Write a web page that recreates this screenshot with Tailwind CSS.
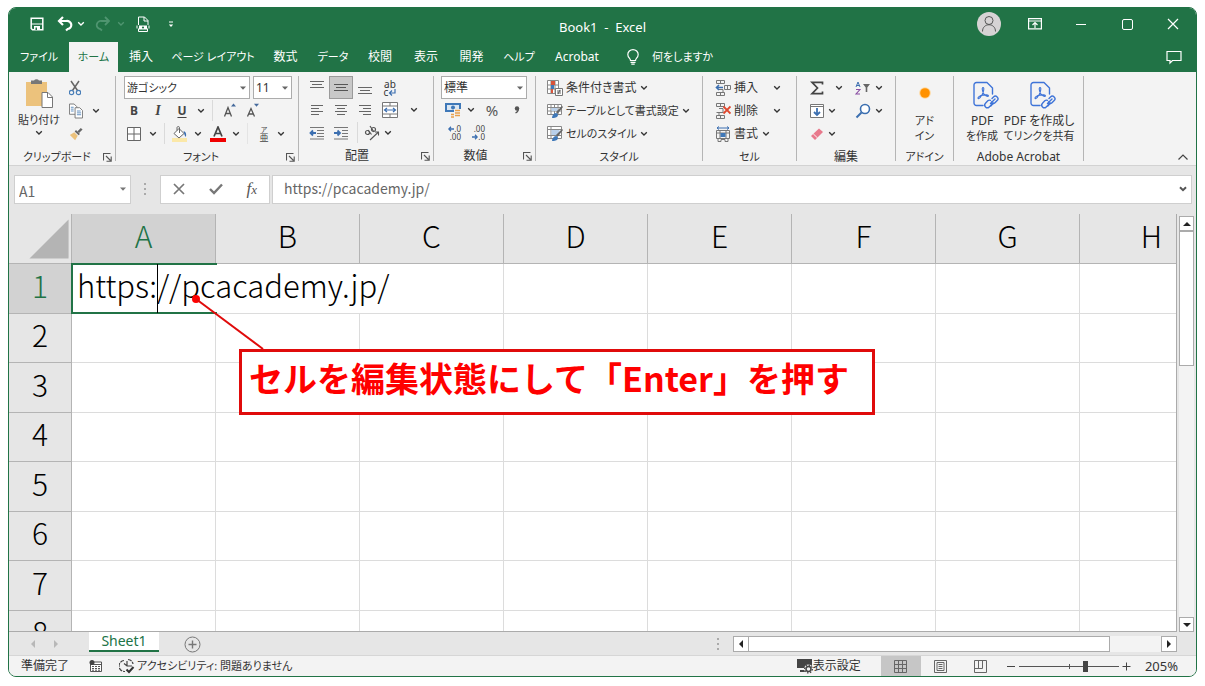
<!DOCTYPE html>
<html lang="ja">
<head>
<meta charset="utf-8">
<title>Book1 - Excel</title>
<script src="https://cdn.jsdelivr.net/npm/@tailwindcss/browser@4"></script>
</head>
<body class="bg-white">
<svg class="hidden" aria-hidden="true">
  <symbol id="chev" viewBox="0 0 8 6"><path d="M1.2 1.2 4 4l2.800-2.800" fill="none" stroke="currentColor" stroke-width="1.300"/></symbol>
  <symbol id="tri" viewBox="0 0 6 4"><path d="M0 .5h6L3 3.800z" fill="currentColor"/></symbol>
  <symbol id="launch" viewBox="0 0 9 9"><path d="M.5 7.500V.5h7M3 3l4.500 4.500M8.200 3.500v4.700H3.500" fill="none" stroke="#555" stroke-width="1.100"/></symbol>
  <symbol id="pdf" viewBox="0 0 26 30">
    <g fill="none" stroke="#3f74d8" stroke-width="1.400" stroke-linecap="round" stroke-linejoin="round">
      <path d="M10 24.500H3.500A2.500 2.500 0 0 1 1 22V4a2.500 2.500 0 0 1 2.500-2.500H14l5.500 5.500v6"/>
      <path d="M10 6.500c1.600 0 .5 4.500-.8 7-1.300 2.400-3 4.600-4 4-1.200-.8 2-3 4.500-3.400 2.800-.5 6-.3 5.700.9-.4 1.200-3.500-.5-4.800-2.500-1.200-2-2-6-.6-6z" stroke-width="1.100"/>
      <path d="M17.500 22.500l4.500-4.500M19 17.500l1.500-1.500a2.500 2.500 0 0 1 3.700 3.600l-2.200 2.200a2.500 2.500 0 0 1-3.500 0M20.500 22l-2.700 2.900"/>
      <path d="M17.500 19.300a2.600 2.600 0 0 0-2.700.5l-2.300 2.400a2.600 2.600 0 0 0 3.700 3.700l2-2a2.500 2.500 0 0 0 .3-3"/>
    </g>
  </symbol>
</svg>

<div class="flex h-screen flex-col px-2 pt-[7px] pb-[9px] font-['Noto_Sans','Noto_Sans_CJK_JP',sans-serif] text-[12px] leading-4 text-[#333] [font-feature-settings:'palt']">
<div class="flex min-h-0 flex-1 flex-col overflow-hidden rounded-lg border border-[#217346] bg-[#e6e6e6]">

  <!-- Title bar -->
  <header class="grid h-[34px] shrink-0 grid-cols-[1fr_auto_1fr] items-center bg-[#217346] text-white">
    <div class="flex items-center pb-0.5 pl-[20px]">
      <button aria-label="上書き保存" class="flex w-4 justify-center"><svg class="size-3.5" viewBox="0 0 14 14"><path d="M1.200 1.200h11.600v11.600H2.500L1.200 11.500z" fill="none" stroke="#fff" stroke-width="1.500"/><path d="M1 7h12" stroke="#fff"/><path d="M4 9h6v4H4z" fill="#fff"/><path d="M5.500 10.500h1.500V13H5.500z" fill="#217346"/></svg></button>
      <button aria-label="元に戻す" class="ml-3 flex w-4 justify-center"><svg class="size-4" viewBox="0 0 16 16"><path d="M6 1 2 5l4 4M2.500 5h6.700a4.300 4 0 0 1 1.500 8L9 14.500" fill="none" stroke="#fff" stroke-width="2.200"/></svg></button>
      <button aria-label="元に戻す履歴" class="flex w-4 justify-center"><svg class="h-1.5 w-2"><use href="#chev"/></svg></button>
      <button aria-label="やり直し" class="ml-1.5 flex w-4 justify-center text-[#4f9570]"><svg class="size-4" viewBox="0 0 16 16"><path d="m10 1 4 4-4 4M13.500 5H6.800a4.300 4 0 0 0-1.500 8L7 14.500" fill="none" stroke="currentColor" stroke-width="1.800"/></svg></button>
      <button aria-label="やり直し履歴" class="flex w-5 justify-center text-[#4f9570]"><svg class="h-1.5 w-2"><use href="#chev"/></svg></button>
      <button aria-label="印刷プレビュー" class="ml-1 flex w-4 justify-center"><svg class="h-4 w-3.5" viewBox="0 0 14 16"><path d="M2.500 9V1h6l3.500 3.500V9M8 1v4h4" fill="none" stroke="#fff"/><path d="M1 9.500v3M13 9.500v3M2.500 12.500v3h9v-3" fill="none" stroke="#fff"/><path d="M3 9.500h8v4H3z" fill="#fff"/><circle cx="7" cy="11.500" r="1.100" fill="#217346"/></svg></button>
      <button aria-label="クイック アクセスのカスタマイズ" class="ml-3 flex w-4 justify-center"><svg class="h-2 w-1.5" viewBox="0 0 6 8"><path d="M1 2h4" stroke="#fff"/><path d="M.8 4.500h4.400L3 7z" fill="#fff"/></svg></button>
    </div>
    <h1 class="whitespace-pre pt-1 text-[13px]">Book1  -  Excel</h1>
    <div class="flex items-center justify-end pb-0.5">
      <button aria-label="アカウント" class="flex w-[46px] justify-center"><svg class="size-6" viewBox="0 0 24 24"><circle cx="12" cy="12" r="12" fill="#d6d3d4"/><circle cx="12" cy="8.500" r="4" fill="none" stroke="#555"/><path d="M5.500 19.500c0-9 13-9 13 0" fill="none" stroke="#555"/></svg></button>
      <button aria-label="リボンの表示オプション" class="flex w-[46px] justify-center"><svg class="h-3 w-3.5" viewBox="0 0 14 12"><path d="M.6.6h12.800v10.200H.6zM.6 3h12.800" fill="none" stroke="#fff" stroke-width="1.200"/><path d="M7 10V4.500M4.500 7 7 4.500 9.500 7" fill="none" stroke="#fff" stroke-width="1.200"/></svg></button>
      <button aria-label="最小化" class="flex w-[46px] justify-center"><span class="h-px w-2.5 bg-white"></span></button>
      <button aria-label="最大化" class="flex w-[46px] justify-center"><span class="size-[11px] rounded-xs border border-white"></span></button>
      <button aria-label="閉じる" class="flex w-[46px] justify-center"><svg class="size-3" viewBox="0 0 12 12"><path d="m1 1 10 10M11 1 1 11" stroke="#fff" stroke-width="1.200"/></svg></button>
    </div>
  </header>

  <!-- Ribbon tabs -->
  <nav class="flex h-[30px] shrink-0 items-stretch bg-[#217346] text-white">
    <button class="w-[60px] whitespace-nowrap text-[11px]">ファイル</button>
    <button class="w-[49px] whitespace-nowrap bg-[#f3f3f3] text-[11px] text-[#217346]">ホーム</button>
    <button class="w-[46px] whitespace-nowrap">挿入</button>
    <button class="w-[98px] whitespace-nowrap text-[11px]">ページ レイアウト</button>
    <button class="w-[47px] whitespace-nowrap">数式</button>
    <button class="w-12 whitespace-nowrap text-[11px]">データ</button>
    <button class="w-[46px] whitespace-nowrap">校閲</button>
    <button class="w-[46px] whitespace-nowrap">表示</button>
    <button class="w-[45px] whitespace-nowrap">開発</button>
    <button class="w-[50px] whitespace-nowrap text-[11px]">ヘルプ</button>
    <button class="w-[66px] whitespace-nowrap">Acrobat</button>
    <button class="ml-4 flex items-center gap-3 whitespace-nowrap text-[11px]"><svg class="h-4 w-3.5" viewBox="0 0 14 16"><path d="M4.500 11.500c0-2-2.700-2.800-2.700-6a5.200 4.900 0 0 1 10.400 0c0 3.200-2.700 4-2.700 6z" fill="none" stroke="#fff" stroke-width="1.200"/><path d="M4.500 13.300h5M5.300 15.200h3.400" stroke="#fff" stroke-width="1.300"/></svg>何をしますか</button>
    <button aria-label="コメント" class="mr-[14px] ml-auto"><svg class="size-4" viewBox="0 0 16 16"><path d="M1 2.500h14v9H6.500L4 14v-2.500H1z" fill="none" stroke="#fff" stroke-width="1.200"/></svg></button>
  </nav>

  <!-- Ribbon -->
  <div class="flex h-[94px] shrink-0 border-b border-[#d2d2d2] bg-[#f3f3f3] pt-1 pb-1">
    <section class="flex w-[107px] shrink-0 flex-col border-r border-[#b5b5b5]">
      <div class="flex h-[69px]">
        <button class="flex w-[60px] flex-col items-center gap-0.5 pt-0.5">
          <svg class="h-[30px] w-7" viewBox="0 0 28 30"><path d="M1 4h21v24H1z" fill="#ecc27c"/><path d="M6 6V2.500h3a2.800 2.500 0 0 1 5 0h3V6z" fill="#777"/><path d="M17 14.500h6l4.500 4.500v10.500H17z" fill="#fff" stroke="#777"/><path d="M22.500 14.500V19.500h5" fill="none" stroke="#777"/></svg>
          <span class="whitespace-nowrap pt-0.5 text-[11px]">貼り付け</span>
          <svg class="h-1.5 w-2"><use href="#chev"/></svg>
        </button>
        <div class="flex flex-col pl-[-4px]">
          <button aria-label="切り取り" class="flex h-[23px] w-4 items-center"><svg class="h-4 w-3" viewBox="1 0 12 16"><path d="M3 1l6.500 9.500M11 1 4.500 10.500" stroke="#666" stroke-width="1.500"/><circle cx="3.500" cy="12.500" r="2.200" fill="none" stroke="#4a7fb8" stroke-width="1.200"/><circle cx="10.500" cy="12.500" r="2.200" fill="none" stroke="#4a7fb8" stroke-width="1.200"/></svg></button>
          <div class="flex h-[23px] items-center"><button aria-label="コピー" class="w-5"><svg class="h-4 w-3.5" viewBox="0 0 15 16"><path d="M.5.5h5l3 3v8h-8z" fill="#fff" stroke="#777"/><path d="M6.500 4.500h5l3 3v8h-8z" fill="#fff" stroke="#777"/><path d="M2 4h3M2 6h3M2 8h3M8.500 8h4M8.500 10h4.500M8.500 12h4.500" stroke="#4a7fb8" stroke-width=".9"/></svg></button><button aria-label="コピーのオプション" class="flex w-[14px] justify-center"><svg class="h-1.5 w-2"><use href="#chev"/></svg></button></div>
          <button aria-label="書式のコピー" class="flex h-[23px] w-5 items-center"><svg class="size-3.5" viewBox="0 0 16 16"><path d="m1 9 5-3 4 4-3 5z" fill="#ecc27c"/><path d="m6.500 5 4.500 4.500 1.500-1.500L8 3.500z" fill="#666"/><path d="m10.500 6 4-4" stroke="#666" stroke-width="2.800"/></svg></button>
        </div>
      </div>
      <div class="flex h-4 items-center pt-2 pr-[3px] pl-[14px]"><span class="flex-1 whitespace-nowrap text-[11px]">クリップボード</span><button aria-label="クリップボードの設定"><svg class="size-[9px]"><use href="#launch"/></svg></button></div>
    </section>

    <section class="flex w-[183px] shrink-0 flex-col border-r border-[#b5b5b5]">
      <div class="flex h-[23px] items-center gap-[3px] pl-2">
        <label class="relative flex"><select aria-label="フォント" class="h-[23px] w-[126px] appearance-none border border-[#acacac] bg-white px-0.5 text-[11px]"><option>游ゴシック</option></select><svg class="pointer-events-none absolute top-2.5 right-1 h-1 w-1.5 text-[#666]"><use href="#tri"/></svg></label>
        <label class="relative flex"><select aria-label="フォント サイズ" class="h-[23px] w-[39px] appearance-none border border-[#acacac] bg-white px-0.5 text-[12px]"><option>11</option></select><svg class="pointer-events-none absolute top-2.5 right-1 h-1 w-1.5 text-[#666]"><use href="#tri"/></svg></label>
      </div>
      <div class="flex h-[23px] items-center pl-1.5">
        <button class="w-6 font-bold text-[#444]">B</button>
        <button class="w-6 font-['Liberation_Serif',serif] text-[14px] font-bold italic text-[#444]">I</button>
        <button class="w-6 font-bold text-[#444] underline underline-offset-2">U</button>
        <button aria-label="下線の種類" class="flex w-3.5 justify-center"><svg class="h-1.5 w-2"><use href="#chev"/></svg></button>
        <span class="ml-1 mr-1.5 h-[21px] w-px bg-[#dadada]"></span>
        <button aria-label="フォント サイズの拡大" class="flex w-[22px] justify-center"><svg class="h-4 w-3.5" viewBox="0 0 14 16"><path d="M1.500 13.500 5 4.500l3.500 9M2.700 10.500h4.600" fill="none" stroke="#555" stroke-width="1.300"/><path d="m8 3.500 2.500-3 2.500 3z" fill="#44699c"/></svg></button>
        <button aria-label="フォント サイズの縮小" class="flex w-6 justify-center"><svg class="h-4 w-3.5" viewBox="0 0 14 16"><path d="M1.500 13.500 5 5.500l3.500 8M2.700 11h4.600" fill="none" stroke="#555" stroke-width="1.300"/><path d="m8 .8 2.500 3 2.500-3z" fill="#44699c"/></svg></button>
      </div>
      <div class="flex h-[23px] items-center pl-1.5">
        <button aria-label="罫線" class="flex w-6 justify-center"><svg class="size-3.5" viewBox="0 0 14 14"><path d="M.5.5h13v13H.5zM7 .5v13M.5 7h13" fill="#fff" stroke="#666"/></svg></button>
        <button aria-label="罫線の種類" class="flex w-3.5 justify-center"><svg class="h-1.5 w-2"><use href="#chev"/></svg></button>
        <span class="ml-1 mr-1 h-[21px] w-px bg-[#dadada]"></span>
        <button aria-label="塗りつぶしの色" class="flex w-[22px] justify-center"><svg class="size-4" viewBox="0 0 16 16"><path d="M0 12h15v4H0z" fill="#fbe8a8"/><path d="m2 7.500 5-5 5 5-5 4.500z" fill="#fff" stroke="#666"/><path d="M5 4.500V1.500c0-1.200 2.500-1.200 2.500 0V7" fill="none" stroke="#666"/><path d="M11.500 5c3 1 2.800 3.500 2.500 6-1-.5-1.800-2.500-2-4.500z" fill="#3c6fb0"/></svg></button>
        <button aria-label="塗りつぶしの色の選択" class="flex w-3.5 justify-center"><svg class="h-1.5 w-2"><use href="#chev"/></svg></button>
        <button aria-label="フォントの色" class="flex w-[26px] justify-center"><svg class="size-4" viewBox="0 0 16 16"><path d="M0 12h16v4H0z" fill="#f00000"/><path d="m4 10.500 4-9.500 4 9.500M5.500 7.500h5" fill="none" stroke="#444" stroke-width="1.700"/></svg></button>
        <button aria-label="フォントの色の選択" class="flex w-2.5 justify-center"><svg class="h-1.5 w-2"><use href="#chev"/></svg></button>
        <span class="mx-1.5 h-[21px] w-px bg-[#e4e4e4]"></span>
        <button aria-label="ふりがな" class="flex w-5 flex-col items-center text-[#444]"><span class="text-[7px] leading-[7px]">ア</span><span class="text-[9px] leading-[9px]">亜</span></button>
        <button aria-label="ふりがなのオプション" class="flex w-3.5 justify-center"><svg class="h-1.5 w-2"><use href="#chev"/></svg></button>
      </div>
      <div class="flex h-4 items-center pt-2 pr-[3px]"><span class="flex-1 text-center text-[11px]">フォント</span><button aria-label="フォントの設定"><svg class="size-[9px]"><use href="#launch"/></svg></button></div>
    </section>

    <section class="flex w-[135px] shrink-0 flex-col border-r border-[#b5b5b5]">
      <div class="flex h-[23px] items-center pl-1.5">
        <button aria-label="上揃え" class="flex w-6 justify-center"><svg class="size-4" viewBox="0 0 16 16"><path d="M1 1.500h14M3 4.500h10M1 7.500h14" stroke="#666"/></svg></button>
        <button aria-label="上下中央揃え" aria-pressed="true" class="flex h-[23px] w-6 items-center justify-center border border-[#9a9a9a] bg-[#c8c8c8]"><svg class="size-4" viewBox="0 0 16 16"><path d="M1 4.500h14M3 7.500h10M1 10.500h14" stroke="#555"/></svg></button>
        <button aria-label="下揃え" class="flex w-6 justify-center"><svg class="size-4" viewBox="0 0 16 16"><path d="M1 7.500h14M3 10.500h10M1 13.500h14" stroke="#666"/></svg></button>
        <button aria-label="折り返して全体を表示する" class="flex w-[26px] flex-col items-center text-[10px] leading-[8px] text-[#333]"><span>ab</span><span class="flex items-center">c<svg class="size-2" viewBox="0 0 8 8"><path d="M7 1v4H1.500M4 2.500 1.500 5 4 7.500" fill="none" stroke="#3c6fb0" stroke-width="1.200"/></svg></span></button>
      </div>
      <div class="flex h-[23px] items-center pl-1.5">
        <button aria-label="左揃え" class="flex w-6 justify-center"><svg class="h-3 w-3.5" viewBox="0 0 14 12"><path d="M1 1.500h12M1 4.500h8M1 7.500h12M1 10.500h8" stroke="#666"/></svg></button>
        <button aria-label="中央揃え" class="flex w-6 justify-center"><svg class="h-3 w-3.5" viewBox="0 0 14 12"><path d="M1 1.500h12M3 4.500h8M1 7.500h12M3 10.500h8" stroke="#666"/></svg></button>
        <button aria-label="右揃え" class="flex w-6 justify-center"><svg class="h-3 w-3.5" viewBox="0 0 14 12"><path d="M1 1.500h12M5 4.500h8M1 7.500h12M5 10.500h8" stroke="#666"/></svg></button>
        <button aria-label="セルを結合して中央揃え" class="flex w-[26px] justify-center"><svg class="size-4" viewBox="0 0 16 16"><path d="M.5.5h15v15H.5zM.5 4h15M.5 12h15M8 .5V4M8 12v3.500" fill="#fff" stroke="#777"/><path d="M2.500 8h11M5 6 2.500 8 5 10M11 6l2.500 2-2.500 2" fill="none" stroke="#3c6fb0" stroke-width="1.200"/></svg></button>
        <button aria-label="結合のオプション" class="flex w-[22px] justify-center"><svg class="h-1.5 w-2"><use href="#chev"/></svg></button>
      </div>
      <div class="flex h-[23px] items-center pl-1.5">
        <button aria-label="インデントを減らす" class="flex w-6 justify-center"><svg class="h-3.5 w-4" viewBox="0 0 16 14"><path d="M1 1.500h14M8 4.500h7M8 7.500h7M8 10.500h7M1 13h14" stroke="#777"/><path d="M7 7H1.500M4 4.500 1.500 7 4 9.500" fill="none" stroke="#3c6fb0" stroke-width="1.800"/></svg></button>
        <button aria-label="インデントを増やす" class="flex w-6 justify-center"><svg class="h-3.5 w-4" viewBox="0 0 16 14"><path d="M1 1.500h14M9 4.500h6M9 7.500h6M9 10.500h6M1 13h14" stroke="#777"/><path d="M1 7h5.500M4.500 4.500 7 7 4.500 9.500" fill="none" stroke="#3c6fb0" stroke-width="1.800"/></svg></button>
        <span class="mx-1 h-[21px] w-px bg-[#dadada]"></span>
        <button aria-label="方向" class="flex w-5 justify-center"><svg class="size-4" viewBox="0 0 16 16"><path d="M6 15 14.500 7M11 7h3.500v3.500" fill="none" stroke="#555" stroke-width="1.100"/><circle cx="3.500" cy="7.500" r="2" fill="none" stroke="#555" stroke-width="1.200"/><path d="m4 5 3.500 4.500M6 1l4 6" stroke="#555" stroke-width="1.200"/><circle cx="9.500" cy="4.500" r="2" fill="none" stroke="#555" stroke-width="1.200"/></svg></button>
        <button aria-label="方向のオプション" class="flex w-3 justify-center"><svg class="h-1.5 w-2"><use href="#chev"/></svg></button>
      </div>
      <div class="flex h-4 items-center pt-2 pr-[18px]"><span class="flex-1 text-center">配置</span></div>
      <button aria-label="配置の設定" class="-mt-2 mr-[3px] self-end"><svg class="size-[9px]"><use href="#launch"/></svg></button>
    </section>

    <section class="flex w-[102px] shrink-0 flex-col border-r border-[#b5b5b5]">
      <div class="flex h-[23px] items-center pl-[7px]">
        <label class="relative flex"><select aria-label="表示形式" class="h-[23px] w-[86px] appearance-none border border-[#acacac] bg-white px-0.5 text-[12px]"><option>標準</option></select><svg class="pointer-events-none absolute top-2.5 right-1 h-1 w-1.5 text-[#666]"><use href="#tri"/></svg></label>
      </div>
      <div class="flex h-[23px] items-center pl-[7px]">
        <button aria-label="通貨表示形式" class="flex w-6 justify-center"><svg class="size-4" viewBox="0 0 16 16"><path d="M0 1h16v9H0z" fill="#3f78b8"/><path d="M2 3h12v5H2z" fill="#dbe7f3"/><circle cx="8" cy="5.500" r="2" fill="#3f78b8"/><path d="M9 7h7v9H5v-5h4z" fill="#f3f3f3"/><path d="M10 8.500h5M10 11h5M10 13.500h5M6 12.500h3M6 15h3" stroke="#e8a04c" stroke-width="1.600"/></svg></button>
        <button aria-label="通貨の選択" class="flex w-3 justify-center"><svg class="h-1.5 w-2"><use href="#chev"/></svg></button>
        <button class="w-[30px] text-center text-[15px] text-[#555]">%</button>
        <button aria-label="桁区切りスタイル" class="flex w-5 justify-center"><svg class="h-2 w-1.5" viewBox="0 0 6 8"><circle cx="3" cy="2.500" r="2.200" fill="#555"/><path d="M4.500 2.500c0 2-1 3.500-3 4.500" fill="none" stroke="#555" stroke-width="1.300"/></svg></button>
      </div>
      <div class="flex h-[23px] items-center pl-[7px] text-[8px] leading-[8px] text-[#444]">
        <button aria-label="小数点以下の表示桁数を増やす" class="flex w-6 flex-col items-end pr-1"><span class="flex items-center"><svg class="size-1.5" viewBox="0 0 6 6"><path d="M6 3H1M3 .8.8 3 3 5.200" fill="none" stroke="#3c6fb0" stroke-width="1.300"/></svg>.0</span><span>.00</span></button>
        <button aria-label="小数点以下の表示桁数を減らす" class="flex w-6 flex-col items-end pr-1"><span>.00</span><span class="flex items-center"><svg class="size-1.5" viewBox="0 0 6 6"><path d="M0 3h5M3 .8 5.200 3 3 5.200" fill="none" stroke="#3c6fb0" stroke-width="1.300"/></svg>.0</span></button>
      </div>
      <div class="flex h-4 items-center pt-2 pr-[18px]"><span class="flex-1 text-center">数値</span></div>
      <button aria-label="数値の設定" class="-mt-2 mr-[3px] self-end"><svg class="size-[9px]"><use href="#launch"/></svg></button>
    </section>

    <section class="flex w-[167px] shrink-0 flex-col border-r border-[#b5b5b5]">
      <div class="flex h-[69px] flex-col items-start pl-[11px]">
        <button class="flex h-[23px] items-center gap-[3px] whitespace-nowrap"><svg class="size-4" viewBox="0 0 16 16"><path d="M.5.5h11v13H.5zM.5 5h11M.5 9h11M4 .5v13M8 .5v13" fill="#fff" stroke="#888"/><path d="M4 1h4v4H4zM4 9h2v4H4z" fill="#d8533a"/><path d="M4 5h3v4H4z" fill="#3f78b8"/><path d="M8.500 8.500h7v7h-7z" fill="#fff" stroke="#777"/><path d="M10 11h4M10 13h4M13 9.800l-2 4.400" stroke="#555" stroke-width=".9"/></svg>条件付き書式<svg class="h-1.5 w-2"><use href="#chev"/></svg></button>
        <button class="flex h-[23px] items-center gap-[3px] whitespace-nowrap text-[11px]"><svg class="size-4" viewBox="0 0 16 16"><path d="M.5 1.500h14v10H.5zM.5 4.500h14M.5 8h14M4 1.500v10M7.500 1.500v10M11 1.500v10" fill="#fff" stroke="#888"/><path d="M4.500 5h6v3h-6z" fill="#b9d0ea"/><path d="m9 9 6-6 1 1-5.500 7z" fill="#666"/><path d="M5 15c0-3 2-5 4.500-5l1.500 1.500c0 3-3 3.700-6 3.500z" fill="#3f78b8"/></svg>テーブルとして書式設定<svg class="h-1.5 w-2"><use href="#chev"/></svg></button>
        <button class="flex h-[23px] items-center gap-[3px] whitespace-nowrap text-[11px]"><svg class="size-4" viewBox="0 0 16 16"><path d="M.5.5h14v12H.5zM.5 3.500h14M.5 9.500h14M4 .5v12" fill="#fff" stroke="#888"/><path d="M4.500 4h8v5h-8z" fill="#b9d0ea"/><path d="m9 9 6-6 1 1-5.500 7z" fill="#666"/><path d="M5 15c0-3 2-5 4.500-5l1.500 1.500c0 3-3 3.700-6 3.500z" fill="#3f78b8"/></svg>セルのスタイル<svg class="h-1.5 w-2"><use href="#chev"/></svg></button>
      </div>
      <div class="h-4 pt-1 text-center text-[11px]">スタイル</div>
    </section>

    <section class="flex w-[94px] shrink-0 flex-col border-r border-[#b5b5b5]">
      <div class="flex h-[69px] flex-col pl-3">
        <button class="flex h-[23px] w-[66px] items-center gap-[3px] whitespace-nowrap"><svg class="size-4" viewBox="0 0 16 16"><path d="M1.500.5h8v3h-8zM5.500.5v3M1.500 12.500h8v3h-8zM5.500 12.500v3M9.500 5.500h6v4h-6zM12.500 5.500v4M3 9.500h5v3" fill="none" stroke="#777"/><path d="M8 7.500H1.500M4 5 1.500 7.500 4 10" fill="none" stroke="#3c6fb0" stroke-width="1.600"/></svg>挿入<svg class="ml-auto h-1.5 w-2"><use href="#chev"/></svg></button>
        <button class="flex h-[23px] w-[66px] items-center gap-[3px] whitespace-nowrap"><svg class="size-4" viewBox="0 0 16 16"><path d="M1.500.5h8v3h-8zM5.500.5v3M1.500 12.500h8v3h-8zM5.500 12.500v3M4 5.500h4v4H1.500M4 9.500v3" fill="none" stroke="#777"/><path d="m8.500 3.500 7 7M15.500 3.500l-7 7" stroke="#e0492f" stroke-width="1.900"/></svg>削除<svg class="ml-auto h-1.5 w-2"><use href="#chev"/></svg></button>
        <button class="flex h-[23px] w-[55px] items-center gap-[3px] whitespace-nowrap"><svg class="size-4" viewBox="0 0 16 16"><path d="M2 2h12M4 .5 2 2l2 1.500M12 .5 14 2l-2 1.500" fill="none" stroke="#3c6fb0"/><path d="M1.500 4.500h13v8h-13zM5 4.500v8M11 4.500v8M1.500 7h13M3 12.500v3h3v-2h4v2h3v-3" fill="none" stroke="#777"/><path d="M5.500 7h5v4h-5z" fill="#3f78b8"/></svg>書式<svg class="ml-auto h-1.5 w-2"><use href="#chev"/></svg></button>
      </div>
      <div class="h-4 pt-1 text-center text-[11px]">セル</div>
    </section>

    <section class="flex w-[99px] shrink-0 flex-col border-r border-[#b5b5b5]">
      <div class="flex h-[23px] items-center pl-3">
        <button aria-label="オート SUM" class="flex w-4 justify-center"><svg class="size-3.5" viewBox="0 0 14 14"><path d="M12.500 3.500V1.300H2L7.500 7 2 12.700h10.500v-2.200" fill="none" stroke="#444" stroke-width="1.700"/></svg></button>
        <button aria-label="集計方法" class="flex w-7 justify-center"><svg class="h-1.5 w-2"><use href="#chev"/></svg></button>
        <button aria-label="並べ替えとフィルター" class="flex w-5 items-center justify-center"><svg class="h-3.5 w-4" viewBox="0 0 16 14"><path d="m1 6 2-5 2 5M1.700 4.500h2.600" fill="none" stroke="#3c6fb0"/><path d="M1 8.500h4L1 13h4" fill="none" stroke="#8a4fa3" stroke-width="1.100"/><path d="M8 3h7l-2.700 3.500V11h-1.600V6.500z" fill="#666"/></svg></button>
        <button aria-label="並べ替えのオプション" class="flex w-3 justify-center"><svg class="h-1.5 w-2"><use href="#chev"/></svg></button>
      </div>
      <div class="flex h-[23px] items-center pl-3">
        <button aria-label="フィル" class="flex w-4 justify-center"><svg class="size-3.5" viewBox="0 0 14 14"><path d="M.5.5h13v13H.5zM.5 2.500h13" fill="#fff" stroke="#777"/><path d="M7 4v7M4 8l3 3 3-3" fill="none" stroke="#3c6fb0" stroke-width="1.800"/></svg></button>
        <button aria-label="フィルのオプション" class="flex w-3.5 justify-center"><svg class="h-1.5 w-2"><use href="#chev"/></svg></button>
        <button aria-label="検索と選択" class="ml-3.5 flex w-5 justify-center"><svg class="size-4" viewBox="0 0 16 16"><circle cx="10" cy="6" r="4.500" fill="#fff" stroke="#3c6fb0" stroke-width="1.600"/><path d="m6.500 9.500-5 5" stroke="#3c6fb0" stroke-width="2"/></svg></button>
        <button aria-label="検索のオプション" class="flex w-3 justify-center"><svg class="h-1.5 w-2"><use href="#chev"/></svg></button>
      </div>
      <div class="flex h-[23px] items-center pl-3">
        <button aria-label="クリア" class="flex w-4 justify-center"><svg class="size-3.5" viewBox="0 0 14 14"><path d="m1 9 8-7.500 4 3.500-8 8z" fill="#e8798c"/><path d="m3.200 6.800 4.200 4" stroke="#fff" stroke-width=".9"/></svg></button>
        <button aria-label="クリアのオプション" class="flex w-3.5 justify-center"><svg class="h-1.5 w-2"><use href="#chev"/></svg></button>
      </div>
      <div class="h-4 pt-1 text-center">編集</div>
    </section>

    <section class="flex w-[58px] shrink-0 flex-col border-r border-[#b5b5b5]">
      <button class="flex h-[69px] flex-col items-center pt-[11px] text-[11px] leading-[15px]"><svg class="mb-[14px] size-3" viewBox="0 0 12 12"><circle cx="6" cy="6" r="5.800" fill="#ffd79b"/><circle cx="6" cy="6" r="4.800" fill="#ff9100"/></svg><span>アド</span><span>イン</span></button>
      <div class="h-4 pt-1 text-center text-[11px]">アドイン</div>
    </section>

    <section class="flex w-[130px] shrink-0 flex-col border-r border-[#b5b5b5]">
      <div class="flex h-[69px] pl-2.5 leading-[15px] whitespace-nowrap">
        <button class="flex w-9 flex-col items-center pt-[5px]"><svg class="ml-2 h-[30px] w-[26px]"><use href="#pdf"/></svg><span class="pt-0.5">PDF</span><span class="text-[11px]">を作成</span></button>
        <button class="flex w-[78px] flex-col items-center pt-[5px]"><svg class="ml-2 h-[30px] w-[26px]"><use href="#pdf"/></svg><span class="pt-0.5">PDF を作成し</span><span class="text-[11px]">てリンクを共有</span></button>
      </div>
      <div class="h-4 pt-1 text-center">Adobe Acrobat</div>
    </section>
    <button aria-label="リボンを折りたたむ" class="mr-[7px] ml-auto self-end"><svg class="h-2 w-3" viewBox="0 0 12 8"><path d="m1.500 6.500 4.500-4.500 4.500 4.500" fill="none" stroke="#444" stroke-width="1.200"/></svg></button>
  </div>

  <!-- Formula bar -->
  <div class="flex h-[48px] shrink-0 items-center pr-1 pb-0.5 pl-[5px] text-[#555]">
    <label class="flex h-[29px] w-[117px] items-center border border-[#cfcfcf] bg-white pr-1"><input aria-label="名前ボックス" value="A1" class="w-full min-w-0 px-1 pt-1 font-['Noto_Sans_CJK_JP',sans-serif] text-[14px] text-[#666] outline-none"><svg class="h-1 w-1.5 shrink-0 text-[#777]"><use href="#tri"/></svg></label>
    <svg class="mr-3 ml-[11px] h-3 w-1.5" viewBox="0 0 6 12"><path d="M2 0h2v2H2zM2 5h2v2H2zM2 10h2v2H2z" fill="#aaa"/></svg>
    <div class="flex h-[29px] w-[110px] items-center justify-around border border-[#cfcfcf] bg-white">
      <button aria-label="キャンセル"><svg class="size-3" viewBox="0 0 12 12"><path d="m1 1 10 10M11 1 1 11" stroke="#777" stroke-width="1.700"/></svg></button>
      <button aria-label="入力"><svg class="h-3 w-3.5" viewBox="0 0 14 12"><path d="m1 6 4 4 8-8.500" fill="none" stroke="#777" stroke-width="2.400"/></svg></button>
      <button aria-label="関数の挿入" class="font-['Liberation_Serif',serif] text-[17px] italic text-[#555]">f<span class="text-[13px]">x</span></button>
    </div>
    <label class="ml-0.5 flex h-[29px] flex-1 items-center border border-[#cfcfcf] bg-white pr-1"><input aria-label="数式バー" value="https://pcacademy.jp/" class="w-full min-w-0 px-[11px] pb-0.5 font-['Noto_Sans_CJK_JP',sans-serif] text-[14px] leading-5 text-[#666] outline-none"><svg class="h-1.5 w-2 shrink-0" viewBox="0 0 8 6"><path d="m1 1.200 3 3 3-3" fill="none" stroke="#555" stroke-width="2"/></svg></label>
  </div>

  <!-- Worksheet -->
  <div class="flex min-h-0 flex-1">
    <div class="relative min-w-0 flex-1 overflow-hidden border-r border-b border-[#ababab]">
      <table class="w-[1215px] table-fixed border-separate border-spacing-0 bg-white text-center font-['Noto_Sans_CJK_JP',sans-serif] text-[30px] font-light leading-[40px] text-black [&_td]:border-r [&_td]:border-b [&_td]:border-[#dcdcdc] [&_thead_th]:border-r [&_thead_th]:border-b [&_thead_th]:border-[#b4b4b4] [&_tbody_th]:border-r [&_tbody_th]:border-b [&_tbody_th]:border-[#b4b4b4] [&_th]:px-0 [&_th]:pt-0 [&_th]:pb-2 [&_th]:font-light [&_td]:p-0">
        <colgroup><col class="w-[63px]"><col span="8" class="w-36"></colgroup>
        <thead><tr class="h-[50px] bg-[#e6e6e6]">
          <th aria-label="すべて選択"><svg class="mt-1 -mb-1 ml-auto mr-0.5 size-10" viewBox="0 0 44 44"><path d="M43.500.5v43H.5z" fill="#b4b4b4"/></svg></th>
          <th class="bg-[#d2d2d2] text-[#217346]">A</th><th>B</th><th>C</th><th>D</th><th>E</th><th>F</th><th>G</th><th>H</th>
        </tr></thead>
        <tbody class="[&_tr>th]:bg-[#e6e6e6] [&_tr:first-child>th]:bg-[#d2d2d2]">
          <tr class="h-[50px]"><th class="text-[#217346]">1</th>
            <td class="relative">
              <input aria-label="セル A1" value="https://pcacademy.jp/" class="absolute top-0 left-0 z-10 h-[49px] w-[430px] bg-white pb-2 pl-[5px] text-[31px] font-light outline-none">
              <span class="pointer-events-none absolute -top-px -left-px z-20 h-[51px] w-[146px] border-y-2 border-l-2 border-[#217346]"></span>
              <span class="pointer-events-none absolute top-0 left-[85px] z-20 h-[49px] w-px bg-black"></span>
            </td><td></td><td></td><td></td><td></td><td></td><td></td><td></td></tr>
          <tr class="h-[49px]"><th>2</th><td></td><td></td><td></td><td></td><td></td><td></td><td></td><td></td></tr>
          <tr class="h-[50px]"><th>3</th><td></td><td></td><td></td><td></td><td></td><td></td><td></td><td></td></tr>
          <tr class="h-[49px]"><th>4</th><td></td><td></td><td></td><td></td><td></td><td></td><td></td><td></td></tr>
          <tr class="h-[50px]"><th>5</th><td></td><td></td><td></td><td></td><td></td><td></td><td></td><td></td></tr>
          <tr class="h-[49px]"><th>6</th><td></td><td></td><td></td><td></td><td></td><td></td><td></td><td></td></tr>
          <tr class="h-[50px]"><th>7</th><td></td><td></td><td></td><td></td><td></td><td></td><td></td><td></td></tr>
          <tr class="h-[49px]"><th>8</th><td></td><td></td><td></td><td></td><td></td><td></td><td></td><td></td></tr>
        </tbody>
      </table>
      <svg class="pointer-events-none absolute top-[80px] left-[182px] z-30 h-[56px] w-[76px]" viewBox="0 0 76 56"><circle cx="5" cy="5" r="4" fill="#f00"/><path d="m5 5 67 50" stroke="#e00b0b" stroke-width="2"/></svg>
      <p class="absolute top-[135px] left-[230px] z-30 h-[66px] w-[636px] border-[3px] border-[#e00b0b] bg-white pl-[7px] font-['Noto_Sans_CJK_JP',sans-serif] text-[34px] font-bold leading-[52px] whitespace-nowrap text-[#f00] [font-feature-settings:normal]">セルを編集状態にして「Enter」を押す</p>
    </div>
    <div class="flex w-[19px] shrink-0 flex-col px-0.5 pt-0.5">
      <button aria-label="上へスクロール" class="flex h-[15px] items-center justify-center border border-[#ababab] bg-white"><svg class="h-1 w-2" viewBox="0 0 8 4"><path d="M0 4h8L4 0z" fill="#222"/></svg></button>
      <div class="flex-1 bg-[#f3f3f3]"><div class="h-[135px] border border-[#ababab] bg-white"></div></div>
      <button aria-label="下へスクロール" class="flex h-[15px] items-center justify-center border border-[#ababab] bg-white"><svg class="h-1 w-2" viewBox="0 0 8 4"><path d="M0 0h8L4 4z" fill="#222"/></svg></button>
    </div>
  </div>

  <!-- Sheet tabs -->
  <div class="flex h-[23px] shrink-0 items-start pr-[19px]">
    <div class="flex h-full w-20 items-center gap-[17px] pl-[21px] text-[#b8b8b8]">
      <button aria-label="前のシート"><svg class="h-2 w-1.5" viewBox="0 0 6 8"><path d="M5 0v8L1 4z" fill="currentColor"/></svg></button>
      <button aria-label="次のシート"><svg class="h-2 w-1.5" viewBox="0 0 6 8"><path d="M1 0v8l4-4z" fill="currentColor"/></svg></button>
    </div>
    <button class="h-5 w-[70px] border-b-2 border-[#217346] bg-white text-[14px] leading-4 text-[#217346]">Sheet1</button>
    <button aria-label="新しいシート" class="mt-1 ml-[25px]"><svg class="size-[17px]" viewBox="0 0 17 17"><circle cx="8.500" cy="8.500" r="7.500" fill="none" stroke="#777"/><path d="M4.500 8.500h8M8.500 4.500v8" stroke="#777" stroke-width="1.400"/></svg></button>
    <svg class="mt-1.5 mr-3 ml-auto h-3 w-1.5" viewBox="0 0 6 12"><path d="M2 0h2v2H2zM2 5h2v2H2zM2 10h2v2H2z" fill="#aaa"/></svg>
    <div class="mt-1 flex h-4 w-[444px] bg-[#f3f3f3]">
      <button aria-label="左へスクロール" class="flex w-4 items-center justify-center border border-[#ababab] bg-white"><svg class="h-2 w-1" viewBox="0 0 4 8"><path d="M4 0v8L0 4z" fill="#222"/></svg></button>
      <div class="w-[361px] border border-l-0 border-[#ababab] bg-white"></div>
      <button aria-label="右へスクロール" class="ml-auto flex w-4 items-center justify-center border border-[#ababab] bg-white"><svg class="h-2 w-1" viewBox="0 0 4 8"><path d="M0 0v8l4-4z" fill="#222"/></svg></button>
    </div>
  </div>

  <!-- Status bar -->
  <footer class="flex h-[21px] shrink-0 items-center border-t border-[#d6d6d6] bg-[#f3f3f3] pr-[18px] pl-3 whitespace-nowrap">
    <span>準備完了</span>
    <button aria-label="マクロの記録" class="ml-5"><svg class="h-3 w-3.5" viewBox="0 0 14 12"><path d="M1.500 2h11v9.500h-11zM1.500 4.500h11" fill="#fff" stroke="#555"/><path d="M3 6.500h8M3 8.500h8M3 10.200h8" stroke="#555" stroke-dasharray="2 1"/><circle cx="3" cy="2.500" r="2.500" fill="#444"/></svg></button>
    <button class="ml-4 flex items-center gap-0.5"><svg class="size-4" viewBox="0 0 16 16"><path d="M5 2.500a5.500 5.500 0 0 0 1 11M9 1.500c3 .3 4.500 2 5 4.500" fill="none" stroke="#444" stroke-width="1.200" stroke-dasharray="4 1"/><path d="M8 3v5M5 5.500l3 2.500h5" fill="none" stroke="#444" stroke-width="1.200"/><path d="m7.500 11.500 2.500 2.500 4.500-5" fill="none" stroke="#333" stroke-width="2"/></svg><span class="text-[11px]">アクセシビリティ: 問題ありません</span></button>
    <button class="ml-auto flex items-center"><svg class="size-4" viewBox="0 0 16 16"><path d="M0 1h15v9H0zM3 12h5v2H3z" fill="#444"/><circle cx="11.500" cy="11" r="4.500" fill="#f3f3f3"/><circle cx="11.500" cy="11" r="2.500" fill="none" stroke="#444" stroke-width="1.500"/><circle cx="11.500" cy="11" r="3.900" fill="none" stroke="#444" stroke-width="1.200" stroke-dasharray="1.500 1.500"/></svg>表示設定</button>
    <button aria-label="標準" aria-pressed="true" class="ml-5 flex h-5 w-10 items-center justify-center bg-[#c6c6c6]"><svg class="size-[13px]" viewBox="0 0 13 13"><path d="M.5.5h12v12H.5zM.5 4.500h12M.5 8.500h12M4.500.5v12M8.500.5v12" fill="none" stroke="#666"/></svg></button>
    <button aria-label="ページ レイアウト表示" class="flex w-10 justify-center"><svg class="size-[13px]" viewBox="0 0 13 13"><path d="M.5.5h12v12H.5zM3 2.500h7v8H3zM4.500 4.500h4M4.500 6.500h4M4.500 8.500h4" fill="none" stroke="#666"/></svg></button>
    <button aria-label="改ページ プレビュー" class="flex w-10 justify-center"><svg class="size-[13px]" viewBox="0 0 13 13"><path d="M.5.5h12v12H.5zM.5 8.500h8v-8M4.500.5v8" fill="none" stroke="#666"/></svg></button>
    <button aria-label="縮小" class="ml-0.5 flex w-4 justify-center"><span class="h-px w-2 bg-[#444]"></span></button>
    <label class="relative flex w-[100px] items-center"><input type="range" min="0" max="100" value="68" aria-label="ズーム" class="h-3 w-full appearance-none bg-transparent [&::-webkit-slider-runnable-track]:h-px [&::-webkit-slider-runnable-track]:bg-[#555] [&::-webkit-slider-thumb]:-mt-[5px] [&::-webkit-slider-thumb]:h-[11px] [&::-webkit-slider-thumb]:w-[5px] [&::-webkit-slider-thumb]:appearance-none [&::-webkit-slider-thumb]:bg-[#444]"><span class="absolute left-1/2 h-[5px] w-px bg-[#555]"></span></label>
    <button aria-label="拡大" class="mr-2.5 flex w-4 justify-center"><svg class="size-[9px]" viewBox="0 0 9 9"><path d="M.5 4.500h8M4.500.5v8" stroke="#444"/></svg></button>
    <span class="text-[13px]">205%</span>
  </footer>
</div>
</div>
</body>
</html>
